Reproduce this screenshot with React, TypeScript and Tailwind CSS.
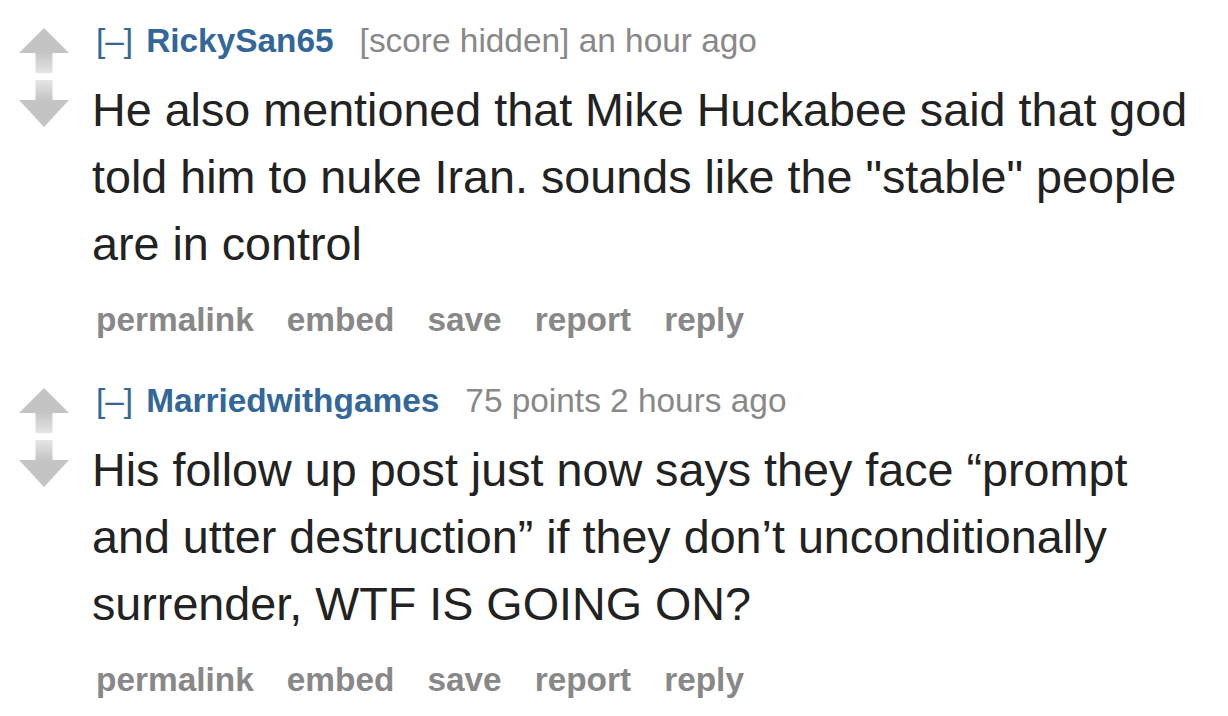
import React from 'react';

interface CommentProps {
  author: string;
  meta: string;
  body: string;
}

const Arrows: React.FC<{ id: string }> = ({ id }) => (
  <svg width="50" height="100" viewBox="0 0 50 100" className="block">
    <defs>
      <linearGradient id={`${id}-up`} x1="0" y1="0" x2="0" y2="1">
        <stop offset="0" stopColor="#c4c4c4" />
        <stop offset="1" stopColor="#e4e4e4" />
      </linearGradient>
      <linearGradient id={`${id}-down`} x1="0" y1="0" x2="0" y2="1">
        <stop offset="0" stopColor="#e4e4e4" />
        <stop offset="1" stopColor="#c4c4c4" />
      </linearGradient>
    </defs>
    {/* upvote */}
    <polygon points="25,0 50,25 0,25" fill="#c4c4c4" />
    <rect x="16.5" y="24" width="17" height="21" fill={`url(#${id}-up)`} />
    {/* downvote */}
    <rect x="16.5" y="52" width="17" height="21" fill={`url(#${id}-down)`} />
    <polygon points="0,72 50,72 25,99" fill="#c4c4c4" />
  </svg>
);

const Comment: React.FC<CommentProps> = ({ author, meta, body }) => (
  <div className="flex pb-[20px]">
    <div className="w-[92px] shrink-0 pl-[19px] pt-[28px]">
      <Arrows id={author} />
    </div>
    <div className="w-[1110px]">
      <p className="ml-[4px] flex items-baseline text-[33.4px] leading-[40px] pt-[21px]">
        <span className="text-[#336699]">[–]</span>
        <span className="ml-[13px] font-bold text-[#336699]">{author}</span>
        <span className="ml-[26px] text-[#888888]">{meta}</span>
      </p>
      <div className="mt-[16px] text-[46.7px] leading-[67px] text-[#222222]">{body}</div>
      <ul className="ml-[4px] mt-[22px] flex gap-[33px] text-[33.4px] leading-[40px] font-bold text-[#888888]">
        <li>permalink</li>
        <li>embed</li>
        <li>save</li>
        <li>report</li>
        <li>reply</li>
      </ul>
    </div>
  </div>
);

export default function App() {
  return (
    <div className="w-[1228px] h-[716px] overflow-hidden bg-white font-['Liberation_Sans',Arial,sans-serif]">
      <Comment
        author="RickySan65"
        meta="[score hidden] an hour ago"
        body={'He also mentioned that Mike Huckabee said that god told him to nuke Iran. sounds like the "stable" people are in control'}
      />
      <Comment
        author="Marriedwithgames"
        meta="75 points 2 hours ago"
        body="His follow up post just now says they face “prompt and utter destruction” if they don’t unconditionally surrender, WTF IS GOING ON?"
      />
    </div>
  );
}
